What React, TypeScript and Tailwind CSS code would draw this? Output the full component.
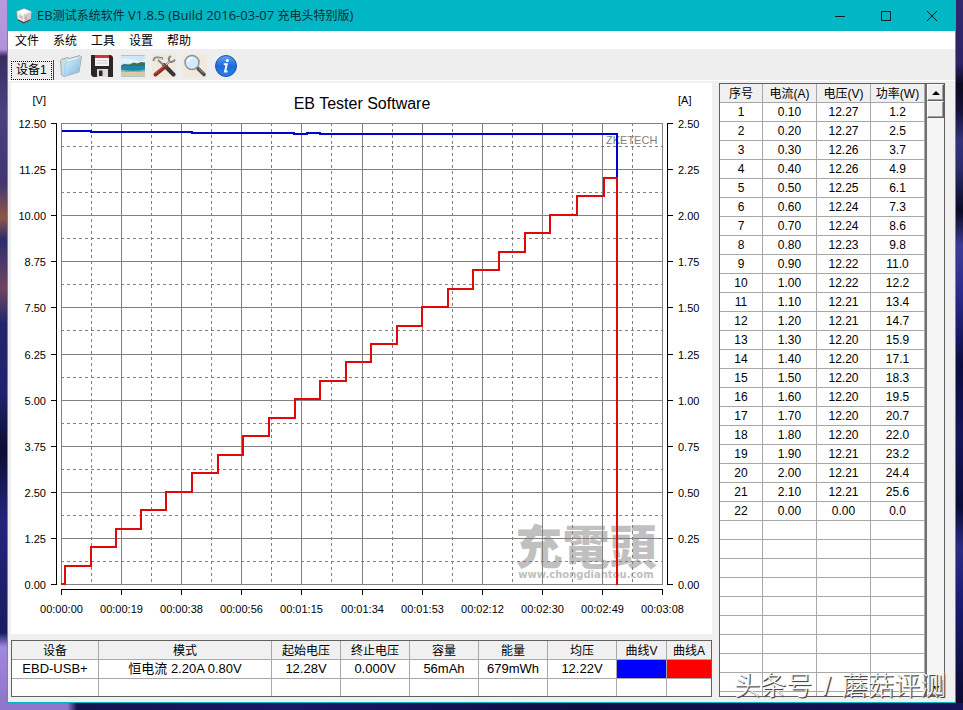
import type { ReactNode } from 'react';

const MENU = ['文件', '系统', '工具', '设置', '帮助'];

// [current, voltage, power]
const READINGS: [string, string, string][] = [
  ['0.10', '12.27', '1.2'],
  ['0.20', '12.27', '2.5'],
  ['0.30', '12.26', '3.7'],
  ['0.40', '12.26', '4.9'],
  ['0.50', '12.25', '6.1'],
  ['0.60', '12.24', '7.3'],
  ['0.70', '12.24', '8.6'],
  ['0.80', '12.23', '9.8'],
  ['0.90', '12.22', '11.0'],
  ['1.00', '12.22', '12.2'],
  ['1.10', '12.21', '13.4'],
  ['1.20', '12.21', '14.7'],
  ['1.30', '12.20', '15.9'],
  ['1.40', '12.20', '17.1'],
  ['1.50', '12.20', '18.3'],
  ['1.60', '12.20', '19.5'],
  ['1.70', '12.20', '20.7'],
  ['1.80', '12.20', '22.0'],
  ['1.90', '12.21', '23.2'],
  ['2.00', '12.21', '24.4'],
  ['2.10', '12.21', '25.6'],
  ['0.00', '0.00', '0.0'],
];

const EMPTY_ROWS = 9;

const TIMES = [
  '00:00:00', '00:00:19', '00:00:38', '00:00:56', '00:01:15', '00:01:34',
  '00:01:53', '00:02:12', '00:02:30', '00:02:49', '00:03:08',
];

// Plot area inside the chart's own viewBox
const PLOT = { left: 50, right: 651, top: 40, bottom: 501 };
const TICKS = Array.from({ length: 11 }, (_, i) => i);
const MIDS = TICKS.slice(0, 10).map(i => i + 0.5);

const gridX = (i: number) => Math.round(PLOT.left + ((PLOT.right - PLOT.left) * i) / 10) + 0.5;
const gridY = (i: number) => Math.round(PLOT.top + ((PLOT.bottom - PLOT.top) * i) / 10) + 0.5;

// x where the load current goes up by 0.1 A
const STEP_X = [54, 80, 105, 130, 155, 181, 207, 232, 258, 284, 309, 335, 360, 386, 411, 437, 462, 488, 514, 539, 566, 593];
const CUTOFF_X = 606;

function currentPath() {
  let d = `M${PLOT.left} ${PLOT.bottom}`;
  STEP_X.forEach((x, i) => {
    d += ` H${x} V${Math.round(PLOT.bottom - (i + 1) * 18.46)}`;
  });
  return `${d} H${CUTOFF_X} V${PLOT.bottom + 1}`;
}

const VOLTAGE_PATH = 'M51 48 H80 V49 H181 V50 H283 V51 H296 V50 H309 V51 H606 V95';

export default function App() {
  return (
    <div className="flex min-h-screen flex-col bg-[#14124e] font-['Liberation_Sans','Noto_Sans_CJK_SC',sans-serif] text-xs text-black">
      <div className="flex">
        <div className="w-[7px] shrink-0 bg-[linear-gradient(180deg,#b99cdc_0%,#b091d8_7%,#3a2c60_8%,#4b4080_16%,#41366f_26%,#8a5846_31%,#2d2b6c_34%,#6d4660_41%,#24246c_46%,#20206e_56%,#0d0d30_64%,#24247c_74%,#1a1a60_90%,#a088dc_92%,#8f76cc_100%)]" />
        <main className="min-w-0 flex-1 border-x border-b border-[#00b7c3] bg-[#f0f0f0]">
          <TitleBar />
          <nav className="flex h-[18px] items-end bg-white pl-[7px]">
            {MENU.map(item => (
              <button key={item} type="button" className="w-[38px] text-left leading-4">{item}</button>
            ))}
          </nav>
          <Toolbar />
          <div className="flex gap-[7px] pt-0.5 pr-2.5 pb-[5px] pl-[3px]">
            <div className="flex min-w-0 flex-1 flex-col gap-1.5">
              <Chart />
              <SummaryTable />
            </div>
            <ReadingsPanel />
          </div>
        </main>
        <div className="w-[7px] shrink-0 bg-[linear-gradient(180deg,#33286e_0%,#2c2468_9%,#0b0a1e_12%,#16143c_16%,#34337a_20%,#2a2a6c_24%,#0b0b24_30%,#3c3c98_35%,#2a2a8c_42%,#0c0c40_52%,#15155a_62%,#0c0c38_72%,#2c2c84_78%,#1a1a70_86%,#0a0a30_100%)]" />
      </div>
      <div className="min-h-[7px] flex-1 bg-[linear-gradient(90deg,#8f76cc_0%,#8f76cc_7%,#14124e_8%,#1a1868_30%,#0e0d44_60%,#16145a_100%)]" />
    </div>
  );
}

function TitleBar() {
  return (
    <header className="flex h-[31px] items-center bg-[#00b7c3]">
      <svg viewBox="0 0 16 16" className="ml-2 size-4 shrink-0">
        <path d="M8 .5 15.500 3.500 14.500 12 8 15.500 1.500 12 .5 3.500Z" fill="#ececec" stroke="#8b8b8b" strokeWidth="0.600" />
        <path d="M8 .8 15 3.700 8 6.500 1 3.700Z" fill="#ffffff" />
        <path d="M8 6.500 15.300 4 14.500 12 8 15.500Z" fill="#cfcccc" />
        <path d="M1.500 11 8 14 14.500 11V12.300L8 15.800 1.500 12.300Z" fill="#4b4546" />
        <path d="M4 7V10M6 8V11.500M10 8.500V11.500" stroke="#b07f80" strokeWidth="0.800" />
      </svg>
      <h1 className="ml-[5px] flex-1 truncate font-['Open_Sans','Noto_Sans_CJK_SC',sans-serif] text-[13px] text-[#102a30]">
        EB<span className="text-xs">测试系统软件</span> V1.8.5 (Build 2016-03-07 <span className="text-xs">充电头特别版</span>)
      </h1>
      <CaptionButton label="最小化"><path d="M0 5.500H10" /></CaptionButton>
      <CaptionButton label="最大化"><path d="M.5 .5H9.500V9.500H.5Z" /></CaptionButton>
      <CaptionButton label="关闭"><path d="M0 0 10 10M10 0 0 10" /></CaptionButton>
    </header>
  );
}

function CaptionButton({ label, children }: { label: string; children: ReactNode }) {
  return (
    <button type="button" aria-label={label} className="flex h-full w-[46px] items-center justify-center">
      <svg viewBox="0 0 10 10" className="size-2.5" fill="none" stroke="#0c2024">{children}</svg>
    </button>
  );
}

function Toolbar() {
  return (
    <div className="flex h-8 items-center border-b border-white bg-[#eeeeee] pt-[3px] pl-[3px]">
      <button type="button" className="mr-0.5 h-5 self-end border-r border-[#404040] pr-px">
        <span className="block h-[19px] border border-dotted border-black px-1 leading-[17px]">设备1</span>
      </button>
      <ToolButton label="打开">
        <defs>
          <linearGradient id="folder" x1="0" y1="0" x2="1" y2="1">
            <stop offset="0" stopColor="#d8effb" />
            <stop offset="1" stopColor="#7fb9e2" />
          </linearGradient>
        </defs>
        <path d="M1.500 6.500 3 5 9 3.500 10.500 4.500 21 1.500 22.500 3 20 18 5 22.500 2.500 21Z" fill="#c4dfee" stroke="#9a9a90" strokeWidth="0.800" />
        <path d="M6.500 8.500 21.500 4.500 19.500 18 5 22.500Z" fill="url(#folder)" stroke="#9cc4de" strokeWidth="0.600" />
        <path d="M8 7 19 4" stroke="#ffffff" />
      </ToolButton>
      <ToolButton label="保存">
        <path d="M1 1H21L23 3V23H3L1 21Z" fill="#2c2628" />
        <path d="M5 1H19V12H5Z" fill="#f4f2f2" />
        <path d="M5 1H19V4H5Z" fill="#d3323a" />
        <path d="M6.500 6.500H17.500M6.500 9H17.500" stroke="#c9c4c4" strokeWidth="0.800" />
        <path d="M7 15H18V23H7Z" fill="#dedcdc" />
        <path d="M9 16.500H12.500V22H9Z" fill="#2c2628" />
      </ToolButton>
      <ToolButton label="图像">
        <path d="M0 1H24V23H0Z" fill="#f3efdf" />
        <path d="M0 2H24V11H0Z" fill="#cde8f5" />
        <path d="M0 5Q8 3 14 6T24 5V9H0Z" fill="#e4f2f7" />
        <path d="M0 11.500 3 10 8 10.500 13 8.500 16 9.500 20 8 24 8.500V12.500H0Z" fill="#3b7254" />
        <path d="M0 12H24V17H0Z" fill="#1f86a8" />
        <path d="M0 15.500Q12 18 24 15.500V18H0Z" fill="#6cb9c4" />
        <path d="M0 17.500Q12 19 24 17.500V22H0Z" fill="#dbc9a0" />
        <path d="M0 1.500H24M0 22.500H24" stroke="#8ba4b4" strokeWidth="0.600" />
      </ToolButton>
      <ToolButton label="工具">
        <path d="M0 0H24V24H0Z" fill="#f1eadc" />
        <path d="M12 11 21.500 20.500" stroke="#3b3535" strokeWidth="4" strokeLinecap="round" />
        <path d="M6 6 12 11.500" stroke="#858585" strokeWidth="2" />
        <path d="M14 12 3.500 20.500" stroke="#8b2f24" strokeWidth="4" strokeLinecap="round" />
        <path d="M13 11.500 3 19.700" stroke="#c8705c" strokeWidth="0.800" />
        <path d="M1.500 7Q2 3 6 3.500L11 4.500" fill="none" stroke="#777777" strokeWidth="2" />
        <path d="M2 6.500Q3 3.800 6 4L10 4.800" fill="none" stroke="#efefef" strokeWidth="0.800" />
        <path d="M14 11 17.500 7.500Q15.500 4 19 2M17.500 7.500Q21 9 23 5.500" fill="none" stroke="#838383" strokeWidth="2" />
        <path d="M14.500 10.500 17.500 7.500" stroke="#f4f4f4" strokeWidth="0.800" />
      </ToolButton>
      <ToolButton label="查找">
        <path d="M0 0H24V24H0Z" fill="#f1eadc" />
        <path d="M15 14.500 21 20.500" stroke="#4c4c4c" strokeWidth="3.600" strokeLinecap="round" />
        <path d="M15.500 14.300 20.500 19" stroke="#b4b4b4" strokeWidth="0.900" />
        <circle cx="9" cy="8.500" r="7" fill="#d5e8fa" stroke="#8a929c" strokeWidth="1.500" />
        <path d="M4.500 8Q5 4 9.500 3.800" fill="none" stroke="#ffffff" strokeWidth="1.800" />
      </ToolButton>
      <ToolButton label="关于">
        <defs>
          <linearGradient id="info" x1="0" y1="0" x2="0" y2="1">
            <stop offset="0" stopColor="#5fa4ee" />
            <stop offset="0.500" stopColor="#1c6bd8" />
            <stop offset="1" stopColor="#2b7fe4" />
          </linearGradient>
        </defs>
        <circle cx="12" cy="12" r="10.500" fill="url(#info)" stroke="#1553ae" />
        <circle cx="13.300" cy="6.500" r="1.600" fill="#ffffff" />
        <path d="M9.800 10.300H12.800L11 17.500H13.500" fill="none" stroke="#ffffff" strokeWidth="1.900" />
      </ToolButton>
    </div>
  );
}

function ToolButton({ label, children }: { label: string; children: ReactNode }) {
  return (
    <button type="button" aria-label={label} className="flex w-[31px] shrink-0 justify-center">
      <svg viewBox="0 0 24 24" className="size-6">{children}</svg>
    </button>
  );
}

function Chart() {
  return (
    <svg viewBox="0 0 701 551" className="block h-auto w-full bg-white text-[11px]">
      <text fill="#c0c0c0" textAnchor="middle">
        <tspan x="575" y="481" className="font-['Noto_Sans_CJK_TC',sans-serif] text-[47px] font-black">充電頭</tspan>
        <tspan x="575" y="495" className="font-['DejaVu_Sans',sans-serif] text-[10px] font-bold">www.chongdiantou.com</tspan>
      </text>

      <g stroke="#808080" shapeRendering="crispEdges">
        {TICKS.map(i => (
          <path key={i} d={`M${gridX(i)} ${PLOT.top}V${PLOT.bottom + 1}M${PLOT.left} ${gridY(i)}H${PLOT.right + 1}`} />
        ))}
        {MIDS.map(i => (
          <path key={i} strokeDasharray="3 3" d={`M${gridX(i)} ${PLOT.top}V${PLOT.bottom}M${PLOT.left} ${gridY(i)}H${PLOT.right}`} />
        ))}
      </g>

      <text x="595" y="61" fill="#808080">ZKETECH</text>

      <g stroke="#000000" fill="none" shapeRendering="crispEdges">
        <path d="M45.500 40V502M656.500 40V502M50 506.500H652" />
        {TICKS.map(i => (
          <path key={i} d={`M40 ${gridY(i)}H45M656 ${gridY(i)}H662M${gridX(i)} 506V512`} />
        ))}
      </g>

      <g fill="none" strokeWidth="2" shapeRendering="crispEdges">
        <path d={VOLTAGE_PATH} stroke="#0000cd" />
        <path d={currentPath()} stroke="#e00808" />
      </g>

      <text x="351" y="26" textAnchor="middle" className="text-base">EB Tester Software</text>
      <text x="35" y="21" textAnchor="end">[V]</text>
      <text x="667" y="21">[A]</text>
      {TICKS.map(i => (
        <g key={i}>
          <text x="35" y={gridY(i) + 4} textAnchor="end">{(12.5 - i * 1.25).toFixed(2)}</text>
          <text x="667" y={gridY(i) + 4}>{(2.5 - i * 0.25).toFixed(2)}</text>
          <text x={gridX(i)} y="530" textAnchor="middle">{TIMES[i]}</text>
        </g>
      ))}
    </svg>
  );
}

const SUMMARY_CELL = 'border-r border-[#a8a8a8] last:border-r-0';

function SummaryTable() {
  return (
    <table className="w-full table-fixed border-separate border-spacing-0 border border-[#606060] bg-white text-center">
      <colgroup>
        <col className="w-[87px]" />
        <col />
        <col className="w-[69px]" />
        <col className="w-[69px]" />
        <col className="w-[69px]" />
        <col className="w-[69px]" />
        <col className="w-[69px]" />
        <col className="w-[50px]" />
        <col className="w-[44px]" />
      </colgroup>
      <thead>
        <tr>
          {['设备', '模式', '起始电压', '终止电压', '容量', '能量', '均压', '曲线V', '曲线A'].map(name => (
            <th key={name} className={`${SUMMARY_CELL} h-[19px] border-b bg-[#f0f0f0] px-0 pt-0.5 pb-0 leading-4 font-normal whitespace-nowrap`}>{name}</th>
          ))}
        </tr>
      </thead>
      <tbody className="text-[13px]">
        <tr>
          {['EBD-USB+', '恒电流 2.20A 0.80V', '12.28V', '0.000V', '56mAh', '679mWh', '12.22V'].map((value, i) => (
            <td key={i} className={`${SUMMARY_CELL} h-[19px] border-b p-0 leading-[18px] whitespace-nowrap`}>{value}</td>
          ))}
          <td className={`${SUMMARY_CELL} h-[19px] border-b bg-[#0000ff] p-0`} />
          <td className={`${SUMMARY_CELL} h-[19px] border-b bg-[#ff0000] p-0`} />
        </tr>
        <tr>
          {Array.from({ length: 9 }, (_, i) => (
            <td key={i} className={`${SUMMARY_CELL} h-[17px] p-0`} />
          ))}
        </tr>
      </tbody>
    </table>
  );
}

const READING_CELL = 'h-[19px] border-r border-b border-[#a8a8a8] whitespace-nowrap';

function ReadingsPanel() {
  return (
    <section className="relative flex w-[226px] shrink-0 self-start border border-[#606060] bg-white">
      <table className="w-[205px] table-fixed border-separate border-spacing-0 text-center">
        <colgroup>
          <col className="w-[43px]" />
          <col className="w-[54px]" />
          <col className="w-[54px]" />
          <col className="w-[54px]" />
        </colgroup>
        <thead>
          <tr>
            {['序号', '电流(A)', '电压(V)', '功率(W)'].map(name => (
              <th key={name} className={`${READING_CELL} bg-[#f0f0f0] px-0 pt-0.5 pb-0 leading-4 font-normal`}>{name}</th>
            ))}
          </tr>
        </thead>
        <tbody>
          {READINGS.map((row, i) => (
            <tr key={i}>
              <td className={`${READING_CELL} p-0 leading-[18px]`}>{i + 1}</td>
              {row.map((value, j) => (
                <td key={j} className={`${READING_CELL} p-0 leading-[18px]`}>{value}</td>
              ))}
            </tr>
          ))}
          {Array.from({ length: EMPTY_ROWS }, (_, i) => (
            <tr key={i}>
              {[0, 1, 2, 3].map(j => <td key={j} className={`${READING_CELL} p-0`} />)}
            </tr>
          ))}
          <tr>
            {[0, 1, 2, 3].map(j => <td key={j} className="h-1 border-r border-[#a8a8a8] p-0" />)}
          </tr>
        </tbody>
      </table>

      <div className="flex flex-1 flex-col border-l-2 border-[#707070] bg-[#f5f5f5]">
        <ScrollButton label="向上滚动" points="0,4 8,4 4,0" />
        <div className="h-[17px] border border-t-white border-r-[#606060] border-b-[#606060] border-l-white bg-[#f0f0f0] shadow-[inset_-1px_-1px_#a0a0a0]" />
        <div className="flex-1" />
        <ScrollButton label="向下滚动" points="0,0 8,0 4,4" />
      </div>

      <div className="absolute -right-0.5 -bottom-1.5 text-[26px] leading-8 font-light whitespace-nowrap text-[#f8f8f8] [text-shadow:1px_1px_1px_#404040,1px_1px_0_#707070]">
        头条号<span className="px-1"> / </span>蘑菇评测
      </div>
    </section>
  );
}

function ScrollButton({ label, points }: { label: string; points: string }) {
  return (
    <button
      type="button"
      aria-label={label}
      className="flex h-[17px] items-center justify-center border border-t-white border-r-[#606060] border-b-[#606060] border-l-white bg-[#f0f0f0] shadow-[inset_-1px_-1px_#a0a0a0]"
    >
      <svg viewBox="0 0 8 4" className="h-1 w-2"><polygon points={points} /></svg>
    </button>
  );
}
